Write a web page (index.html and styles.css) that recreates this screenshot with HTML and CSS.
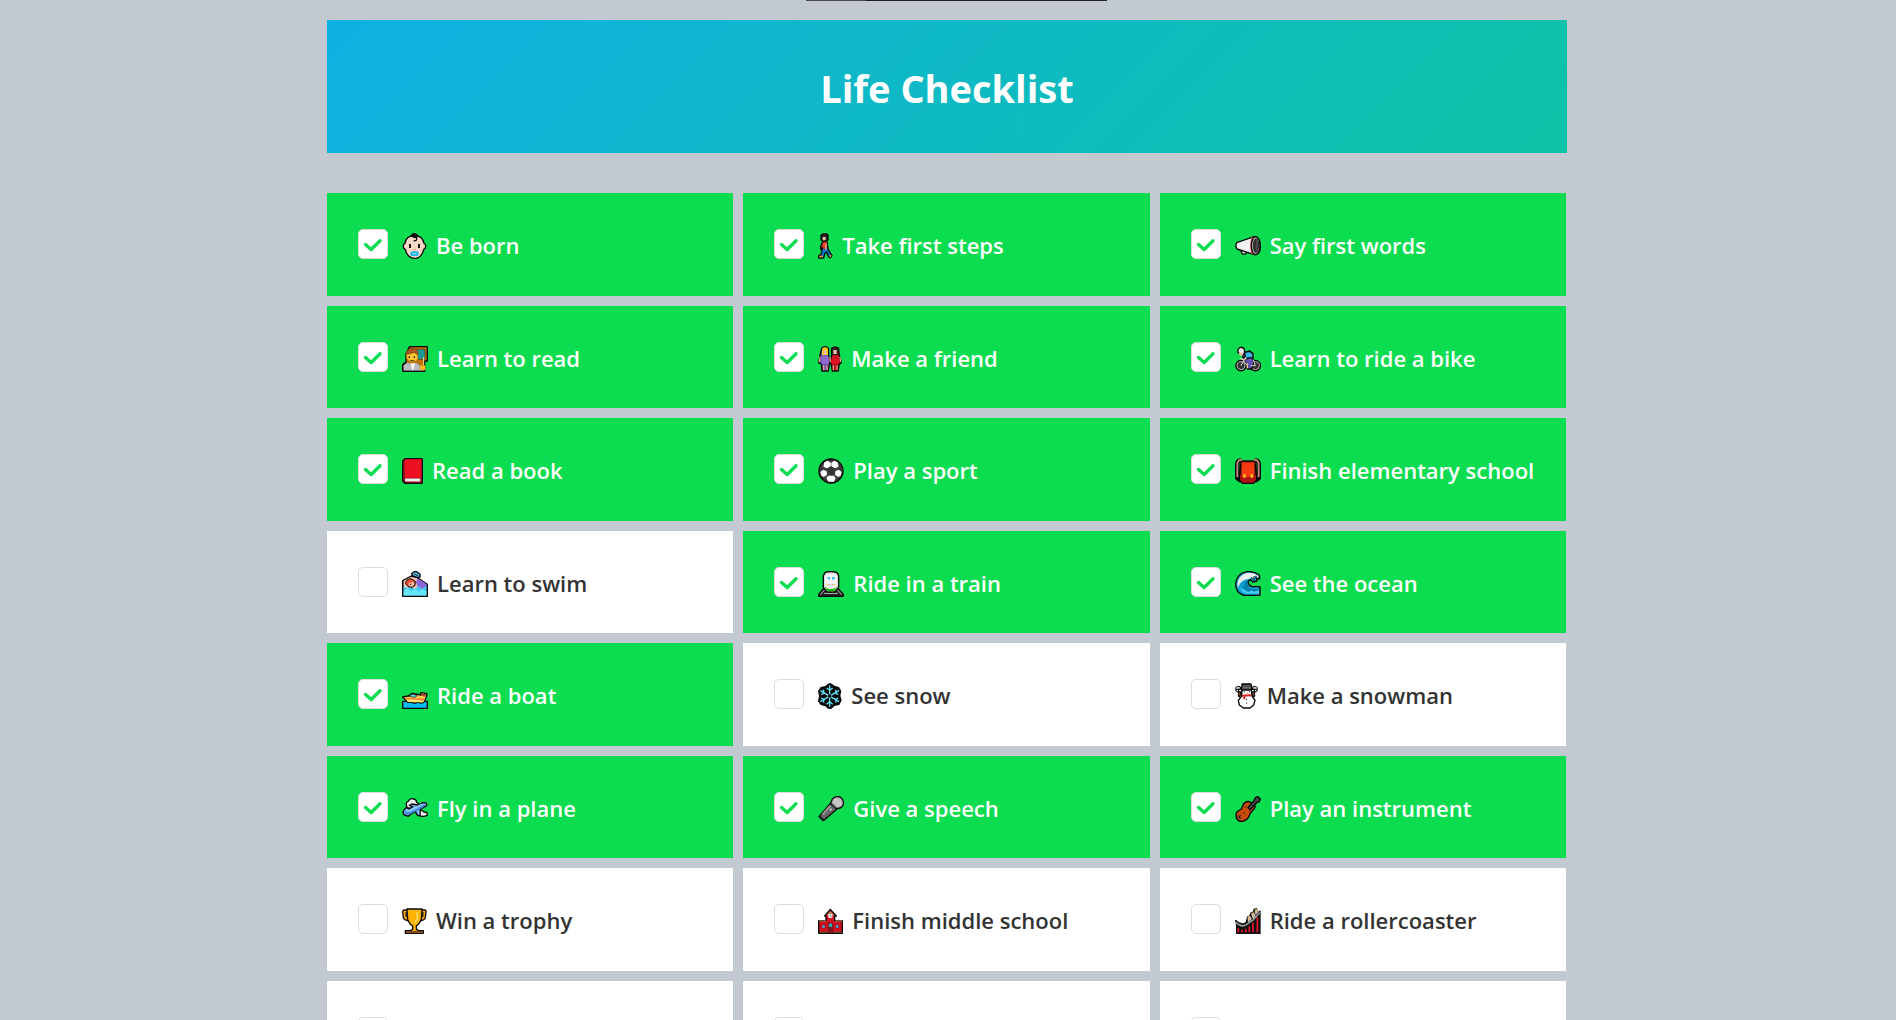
FILE: index.html
```html
<!DOCTYPE html>
<html lang="en">
<head>
<meta charset="utf-8">
<meta name="viewport" content="width=device-width, initial-scale=1">
<title>Life Checklist</title>
<link rel="stylesheet" href="styles.css">
</head>
<body>
<div class="top-tab"></div>
<main class="page">
<header class="banner"><h1>Life Checklist</h1></header>
<ul class="checklist">
<li class="card"><input type="checkbox" id="c1" checked><label for="c1"><svg class="icon" width="25" height="26" viewBox="0 0 75 78"><path d="M38 8C22 8 11 16 9 31C2 33 2 46 10 49C13 66 25 76 38 76S62 66 65 49C73 46 73 33 66 31C63 16 53 8 38 8Z" fill="#f7d7c4"/><path d="M34 12Q46 12 44 19Q43 24 35 23" fill="none"/><path d="M27 9Q36-6 48 9Q44 14 36 12Z" fill="#111"/><path d="M21 33h6v12h-6zM48 33h6v12h-6z" fill="#111" stroke="none"/><path d="M34 49h8v3h-8z" fill="#d59b7c" stroke="none"/><rect x="25" y="55" width="25" height="14" rx="6" fill="#17b5f0" stroke="none"/><path d="M33 59v4h9v-4" stroke="#a5e7ff" stroke-width="3" fill="none"/></svg><span>Be born</span></label></li>
<li class="card"><input type="checkbox" id="c2" checked><label for="c2"><svg class="icon" width="15" height="26" viewBox="0 0 45 78"><path d="M14 26H27L30 49L38 62L42 67L37 75L32 71L25 57L20 62L17 75H2V67L9 66L12 49L14 42L8 48V40Z" fill="#0878d1"/><path d="M16 26h11v21H15V41l-4 4v-5z" fill="#f03d20" stroke="#5d1b19" stroke-width="1"/><path d="M24 32v18" stroke="#ffb092" stroke-width="4"/><path d="M9 7Q20-3 30 6V20Q20 29 9 21Z" fill="#222"/><path d="M14 12h9v10h-9z" fill="#f2c2a9" stroke="none"/><path d="M5 68h9v5H4zM34 68l7-3-3 9z" fill="#f5a817" stroke="none"/></svg><span>Take first steps</span></label></li>
<li class="card"><input type="checkbox" id="c3" checked><label for="c3"><svg class="icon" width="26" height="26" viewBox="0 0 78 78"><path d="M18 50Q18 66 31 63L39 55" fill="#ddd"/><path d="M5 29L57 11Q75 11 76 38T58 65L6 48Q0 38 5 29Z" fill="#f2f2f2"/><path d="M49 14L57 11V65L49 62Q43 37 49 14Z" fill="#ee3942" stroke="none"/><ellipse cx="62" cy="38" rx="13" ry="27" fill="#bbb"/><ellipse cx="63" cy="38" rx="8" ry="21" fill="#333" stroke-width="2"/><path d="M66 20v36" stroke="#777" stroke-width="2"/></svg><span>Say first words</span></label></li>
<li class="card"><input type="checkbox" id="c4" checked><label for="c4"><svg class="icon" width="26" height="26" viewBox="0 0 78 78"><path d="M22 2H76V45H68V74H2V56L12 49V24Z" fill="#bf7200"/><path d="M40 10H69V40H47Z" fill="#189b98" stroke="#5f3a00" stroke-width="2"/><path d="M13 20Q22 3 42 12Q51 20 47 29V40Q31 54 15 39Z" fill="#ffc729" stroke="#c98a10" stroke-width="2"/><path d="M12 24Q17 5 35 7Q50 9 48 28L37 19Q24 25 12 24Z" fill="#a75722" stroke="#693714" stroke-width="2"/><path d="M20 31h4v5h-4zM35 31h4v5h-4zM25 42h11v2H25z" fill="#222" stroke="none"/><path d="M4 74V58L18 49L29 56L43 50L56 60L68 59L70 72L60 75Z" fill="#b9bbc0" stroke="#888" stroke-width="2"/><path d="M25 52L32 75L40 52Z" fill="#fff" stroke="none"/><path d="M65 33V63" stroke="#ffe094" stroke-width="3"/><circle cx="62" cy="65" r="8" fill="#ffbd20" stroke="#c98a10" stroke-width="2"/><path d="M2 76H70M2 76V57L12 49" fill="none"/></svg><span>Learn to read</span></label></li>
<li class="card"><input type="checkbox" id="c5" checked><label for="c5"><svg class="icon" width="24" height="26" viewBox="0 0 72 78"><path d="M11 7Q21-3 32 8V29L38 42L34 55L31 75H12L10 54L2 50L6 29Z" fill="#7250ad"/><path d="M41 7Q51-2 62 7L64 28L70 49L63 56L61 75H43L40 56L35 49L41 29Z" fill="#b90c1c"/><path d="M13 7Q21 0 30 8V27H12Z" fill="#ffd000" stroke="none"/><path d="M42 7Q51 0 60 8V27H41Z" fill="#252525" stroke="none"/><path d="M16 12h10v12H16zM46 12h10v12H46z" fill="#edbda6" stroke="none"/><path d="M6 32L4 48M36 33L37 49M66 33L68 48M17 58V73M27 58V73M46 58V73M57 58V73" stroke="#dba27f" stroke-width="4"/><path d="M12 29H31L33 53H10Z" fill="#8d6bd0" stroke="none"/><path d="M42 29H61L64 53H40Z" fill="#d71325" stroke="none"/></svg><span>Make a friend</span></label></li>
<li class="card"><input type="checkbox" id="c6" checked><label for="c6"><svg class="icon" width="26" height="26" viewBox="0 0 78 78"><circle cx="18" cy="59" r="13" fill="none" stroke-width="9"/><circle cx="61" cy="59" r="13" fill="none" stroke-width="9"/><circle cx="18" cy="59" r="12" fill="#333" stroke="#bbb" stroke-width="3"/><circle cx="61" cy="59" r="12" fill="#333" stroke="#bbb" stroke-width="3"/><path d="M23 22L43 15L53 22L53 39L58 45L50 69H37L35 54L24 43Z" fill="#6452b2"/><path d="M28 19L45 16L54 24V35L38 36L28 43L25 36L31 31Z" fill="#38bae9"/><path d="M14 38H24L30 52L38 57M55 41L61 59H48M18 59L26 43" fill="none" stroke="#ddd" stroke-width="3"/><path d="M9 10Q18-2 28 9L29 22L19 25L9 20Z" fill="#eee"/><path d="M12 19L26 20L22 29L13 28Z" fill="#f1c4ae" stroke="none"/><path d="M34 35L27 42L19 38M37 52V67" stroke="#f1c4ae" fill="none"/></svg><span>Learn to ride a bike</span></label></li>
<li class="card"><input type="checkbox" id="c7" checked><label for="c7"><svg class="icon" width="21" height="26" viewBox="0 0 63 78"><path d="M9 2H61V76H9L2 69V9Z" fill="#a1121d"/><path d="M10 4H58V59H8V6Z" fill="#ed1023" stroke="none"/><path d="M9 61H55V71H9Z" fill="#f1f1f1" stroke="#851621" stroke-width="1"/><path d="M6 8V67" stroke="#891321" stroke-width="3"/></svg><span>Read a book</span></label></li>
<li class="card"><input type="checkbox" id="c8" checked><label for="c8"><svg class="icon" width="26" height="26" viewBox="0 0 78 78"><circle cx="39" cy="39" r="36" fill="#3c3c3c"/><g fill="#fff" stroke="none"><path d="M29 8L39 15L49 8L59 13L62 26L51 31L39 24L27 31L16 26L19 13Z"/><path d="M7 42L16 35L26 40L27 51L17 57L10 53ZM71 42L62 35L52 40L51 51L61 57L68 53Z"/><path d="M31 53H47L53 60L48 71L31 71L25 60Z"/></g><path d="M39 27L51 35L47 49H31L27 35Z" fill="#333" stroke="none"/><path d="M39 14V27M16 26L27 35M62 26L51 35M31 49L22 58M47 49L56 58" stroke="#555" stroke-width="2"/></svg><span>Play a sport</span></label></li>
<li class="card"><input type="checkbox" id="c9" checked><label for="c9"><svg class="icon" width="26" height="26" viewBox="0 0 78 78"><path d="M18 8Q6 5 7 24V60L18 68M60 8Q72 5 71 24V60L60 68" fill="none" stroke-width="14"/><path d="M18 9H60L65 54V66L56 76H22L13 66V54Z" fill="#ae1018"/><path d="M21 6Q6 3 7 24V58M57 6Q72 3 71 24V58" fill="none" stroke="#b88567" stroke-width="6"/><path d="M18 18V52M60 18V52" stroke-width="3"/><path d="M20 14H58V57H20Z" fill="#f53b14" stroke="none"/><path d="M25 49h7v10h-7zM47 49h7v10h-7z" fill="#ffcb23" stroke="none"/></svg><span>Finish elementary school</span></label></li>
<li class="card"><input type="checkbox" id="c10"><label for="c10"><svg class="icon" width="26" height="26" viewBox="0 0 78 78"><path d="M2 46V29L28 15L45 19L59 29L76 40V60H2Z" fill="#f2c6b1"/><path d="M46 22L60 30L76 41V58H50L42 34Z" fill="#8b66d8" stroke="none"/><path d="M2 76V44L14 51L27 46L39 54L50 45L60 54L76 42V76Z" fill="#45c9ee" stroke="none"/><path d="M4 60L17 52L28 61L39 55L50 62L61 55L74 61V74H4Z" fill="#65e7fa" stroke="none"/><path d="M11 38Q12 24 27 23L40 31L39 43L31 49L19 47Z" fill="#f14a2c" stroke-width="3"/><path d="M20 36L34 32L37 40L30 47L20 44Z" fill="#f6c1a9" stroke="none"/><path d="M26 38v4" stroke-width="3"/><path d="M29 8L36 2H44L54 10V18L46 20L31 14Z" fill="#50b8d9"/><path d="M38 9L47 14" stroke="#111" stroke-width="3"/><path d="M2 30V76H76V40" fill="none"/></svg><span>Learn to swim</span></label></li>
<li class="card"><input type="checkbox" id="c11" checked><label for="c11"><svg class="icon" width="26" height="26" viewBox="0 0 78 78"><path d="M17 52L2 70V76H76V70L60 52Z" fill="#222"/><path d="M19 57L7 71M59 57L71 71M19 67H59" stroke="#c8c8c8" stroke-width="3"/><path d="M22 4Q39-1 57 5L62 14V49L51 63H27L16 49V14Z" fill="#d9dce0"/><path d="M25 8H53L57 15V45H21V15Z" fill="#f4f4f4" stroke="none"/><path d="M20 47Q39 57 58 47L49 61H29Z" fill="#16b700" stroke="none"/><path d="M22 44Q24 54 39 54T56 44Z" fill="#eee" stroke="none"/><path d="M28 18H36V26L29 24ZM42 18H51L50 24L42 26Z" fill="#35c6ed" stroke="none"/><path d="M26 39h5v4h-5zM47 39h5v4h-5z" fill="#ffba24" stroke="none"/><path d="M35 39v4M43 39v4" stroke="#777" stroke-width="2"/></svg><span>Ride in a train</span></label></li>
<li class="card"><input type="checkbox" id="c12" checked><label for="c12"><svg class="icon" width="26" height="26" viewBox="0 0 78 78"><path d="M75 73H26Q2 65 2 39Q4 9 34 2Q54-1 73 12L74 24L64 22L66 30L53 33L47 26L39 31Q40 43 51 47H75Z" fill="#0d9dcc"/><path d="M7 39Q9 14 34 6Q55 2 70 14L69 20L58 15L57 25L49 21L37 25Q17 27 9 50Z" fill="#ededed" stroke="none"/><path d="M30 30L38 35Q36 49 53 55H72V69H33Q15 59 28 45Z" fill="#0080ad" stroke="none"/><path d="M15 51Q24 70 39 68H72V57Q58 65 49 58Q40 67 29 56Z" fill="#41cbf2" stroke="none"/><path d="M49 19L58 27M57 16V23M63 14V20" stroke-width="3"/></svg><span>See the ocean</span></label></li>
<li class="card"><input type="checkbox" id="c13" checked><label for="c13"><svg class="icon" width="26" height="26" viewBox="0 0 78 78"><path d="M2 55H76V76H2Z" fill="#00baf0"/><path d="M2 42L18 39L31 31L57 36L56 29L75 32L73 42L66 57Q57 64 48 57Q38 64 30 58H17Z" fill="#ffd34d"/><path d="M19 40L32 33L46 38L38 43Z" fill="#61d3ed" stroke-width="2"/><path d="M7 45H70L66 54Q35 48 13 50Z" fill="#fa8e42" stroke="none"/><path d="M14 51Q42 49 66 54L63 58Q40 57 17 57Z" fill="#ffe477" stroke="none"/><path d="M58 31L73 34L69 41L60 39Z" fill="#a6472b" stroke="none"/></svg><span>Ride a boat</span></label></li>
<li class="card"><input type="checkbox" id="c14"><label for="c14"><svg class="icon" width="24" height="26" viewBox="0 0 72 78"><path d="M29 3L36 0L43 3L49 8L63 12L70 24L67 38L71 52L64 66L49 69L41 77L35 78L28 76L22 70L8 66L0 55L3 39L0 24L8 12L22 9Z" fill="#090909" stroke="none"/><g stroke="#64e2fb" stroke-width="4" fill="none"><path d="M35 7V71M7 23L63 56M7 56L63 23"/><path d="M26 15L35 22L44 15M26 64L35 56L44 64M9 34L18 31L16 20M61 34L53 31L54 20M9 45L18 49L16 59M61 45L53 49L54 59"/></g><circle cx="35" cy="39" r="5" fill="#111" stroke="none"/></svg><span>See snow</span></label></li>
<li class="card"><input type="checkbox" id="c15"><label for="c15"><svg class="icon" width="23" height="26" viewBox="0 0 69 78"><path d="M1 12L12 8L22 14V30L14 44L8 40L9 30L1 24ZM68 12L57 8L47 14V30L55 44L61 40L60 30L68 24Z" fill="#111" stroke="none"/><path d="M4 15h5M12 12v5M13 23h5M5 23h4M60 15h5M57 12v5M51 23h5M60 23h4" stroke="#fff" stroke-width="4"/><path d="M21 21H49L51 39L60 52L56 66L45 75H25L13 66L10 52L20 39Z" fill="#fff"/><path d="M21 3H48L50 18H20Z" fill="#555"/><path d="M22 15H48" stroke="#777"/><path d="M21 38L48 37M28 38V49" stroke="#e01c24" stroke-width="6"/><path d="M35 29l8 2-8 2z" fill="#ff961d" stroke="none"/><path d="M28 25v3M43 25v3M35 48v3M35 59v3" stroke-width="3"/><path d="M12 29l3 8M57 29l-3 8" stroke="#9a5125"/></svg><span>Make a snowman</span></label></li>
<li class="card"><input type="checkbox" id="c16" checked><label for="c16"><svg class="icon" width="26" height="26" viewBox="0 0 78 78"><path d="M15 34Q9 18 19 16Q24 5 35 9Q43 10 44 19Q53 23 50 33L32 40Z" fill="#f1f2f4"/><path d="M48 48Q59 38 65 48Q79 48 75 58Q64 64 50 58Z" fill="#f1f2f4"/><path d="M3 46L12 35L21 39L32 32L22 28L30 24L48 27L63 20Q76 18 74 29L55 40L54 59H47L40 47L28 53L19 61L5 56Z" fill="#65aef2"/><path d="M8 51L22 53L47 41L70 27" stroke="#3b86cd" stroke-width="5" fill="none"/><path d="M12 42L23 44L60 24M49 43L50 53" stroke="#b2dfff" stroke-width="3" fill="none"/></svg><span>Fly in a plane</span></label></li>
<li class="card"><input type="checkbox" id="c17" checked><label for="c17"><svg class="icon" width="26" height="26" viewBox="0 0 78 78"><path d="M3 62L39 20L57 39L16 74Z" fill="#666"/><path d="M38 23L43 9Q53-1 66 3Q80 12 75 28Q67 40 54 37Z" fill="#bdbdbd"/><path d="M42 22L56 35" stroke="#777"/><path d="M52 9L70 27M47 16L63 32" stroke="#e0e0e0" stroke-width="3"/><path d="M37 29L14 55" stroke="#969696" stroke-width="6"/><path d="M35 38h7v5h-7z" fill="#ccc" stroke="none"/><path d="M4 61L17 72" stroke="#222" stroke-width="6"/></svg><span>Give a speech</span></label></li>
<li class="card"><input type="checkbox" id="c18" checked><label for="c18"><svg class="icon" width="26" height="26" viewBox="0 0 78 78"><path d="M5 48L19 39L26 23Q38 12 48 20Q61 23 60 35Q53 44 47 50L40 65Q28 79 12 75Q-1 66 5 48Z" fill="#c74a0b"/><path d="M39 34L57 14L62 4L69 2L76 9L73 17L65 20L45 41Z" fill="#444"/><path d="M11 64L20 55M28 29L35 36M41 44L46 49M31 54L24 48" stroke="#4b2919" stroke-width="3"/><path d="M10 59L17 67" stroke="#292929" stroke-width="5"/></svg><span>Play an instrument</span></label></li>
<li class="card"><input type="checkbox" id="c19"><label for="c19"><svg class="icon" width="25" height="26" viewBox="0 0 75 78"><path d="M17 6H6Q2 6 2 12L4 29Q8 38 22 38M57 6H68Q73 6 72 12L70 29Q66 38 53 38" fill="#ffa500"/><path d="M15 3H60L58 35L50 48L43 54V64L51 68H64V76H10V68H24L32 64V54L24 48L17 35Z" fill="#ffb300"/><path d="M14 12V27M61 12V27" stroke="#222" stroke-width="7"/><path d="M46 12V32L39 45" stroke="#ffdb64" stroke-width="5" fill="none"/><path d="M13 69H61V74H13Z" fill="#78421d" stroke="none"/></svg><span>Win a trophy</span></label></li>
<li class="card"><input type="checkbox" id="c20"><label for="c20"><svg class="icon" width="25" height="26" viewBox="0 0 75 78"><path d="M2 38H24V24H20L37 4L55 24H50V38H73V76H2Z" fill="#d30f1e"/><path d="M25 22L37 9L50 22Z" fill="#b47a55" stroke="none"/><path d="M3 39H24M51 39H73" stroke="#8d6d53"/><circle cx="37" cy="24" r="7" fill="#eee" stroke="none"/><path d="M37 20v5h4" stroke="#777" stroke-width="2" fill="none"/><path d="M12 51h9v9h-9zM53 51h9v9h-9z" fill="#39cdf2" stroke="#85101e" stroke-width="2"/><path d="M31 45h13v27H31z" fill="#29aeb4" stroke="#771220" stroke-width="3"/><path d="M31 57h13v15H31z" fill="#7c171d" stroke="none"/><path d="M4 73h24M48 73h23" stroke="#356626" stroke-width="3"/></svg><span>Finish middle school</span></label></li>
<li class="card"><input type="checkbox" id="c21"><label for="c21"><svg class="icon" width="26" height="26" viewBox="0 0 78 78"><path d="M0 36L4 36Q19 52 32 42L36 26L43 22L47 13L53 12L56 2L66 0L69 11L77 7V78H3V52Z" fill="#111" stroke="none"/><path d="M10 61V73M21 65V73M32 62V73M43 55V73M54 44V73M67 28V73" stroke="#ed1329" stroke-width="5"/><path d="M2 42Q18 60 34 50L54 36L74 14" stroke="#999" stroke-width="5" fill="none"/><path d="M39 28l5-4 5 9-9 8zM50 17l6-3 4 10-6 7zM60 7l5-3 3 9-6 6z" fill="#f1b9a0" stroke="#ddd" stroke-width="2"/><path d="M39 27h7M50 16h7M60 6h5" stroke="#c7ac4c" stroke-width="4"/></svg><span>Ride a rollercoaster</span></label></li>
<li class="card"><input type="checkbox" aria-label="Life goal 22"></li>
<li class="card"><input type="checkbox" aria-label="Life goal 23"></li>
<li class="card"><input type="checkbox" aria-label="Life goal 24"></li>
</ul>
</main>
</body>
</html>
```

FILE: styles.css
```css
* {
  box-sizing: border-box;
}

body {
  height: 100vh;
  margin: 0;
  padding: 20px 2px 0 0;
  overflow: hidden;
  background: #c2c9d0;
  color: #333;
  font-family: "Open Sans", "Noto Sans", sans-serif;
}

.top-tab {
  position: absolute;
  top: 0;
  left: 50%;
  width: 301px;
  height: 1px;
  margin-left: -142px;
  background: linear-gradient(to right, #484848 20%, #222 20%);
}

.page {
  max-width: 1240px;
  margin: 0 auto;
}

.banner {
  padding: 42px 20px 38px;
  background: linear-gradient(135deg, #0fb0e2, #0dc3a6);
  color: #fff;
  text-align: center;
}

.banner h1 {
  margin: 0;
  font-size: 38px;
  font-weight: 700;
  line-height: 53px;
}

.checklist {
  display: grid;
  grid-template-columns: repeat(3, 1fr);
  gap: 10px;
  margin: 40px 0 0;
  padding: 0 1px 0 0;
  list-style: none;
}

.card {
  display: flex;
  align-items: flex-start;
  gap: 14px;
  padding: 36px 31px 35px;
  background: #fff;
  font-size: 22px;
  font-weight: 600;
  line-height: 1.39;
}

.card:has(input:checked) {
  background: #0cdc50;
  color: #fff;
}

.card input {
  flex: none;
  width: 30px;
  height: 30px;
  margin: 0;
  border: 1px solid #ddd;
  border-radius: 5px;
  background: #fff;
  appearance: none;
}

.card input:checked {
  background: #fff url("data:image/svg+xml,%3Csvg xmlns='http://www.w3.org/2000/svg' viewBox='0 0 28 28'%3E%3Cpath d='M6.5 14.5L12.2 19.5L21 10.8' fill='none' stroke='%230cdc50' stroke-width='3.4' stroke-linecap='round' stroke-linejoin='round'/%3E%3C/svg%3E") center / 28px no-repeat;
}

.card label {
  display: flex;
  gap: 9px;
  padding-top: 1px;
  white-space: nowrap;
}

.icon {
  flex: none;
  margin-top: 3px;
  stroke: #080808;
  stroke-width: 4;
  stroke-linejoin: round;
}
```
